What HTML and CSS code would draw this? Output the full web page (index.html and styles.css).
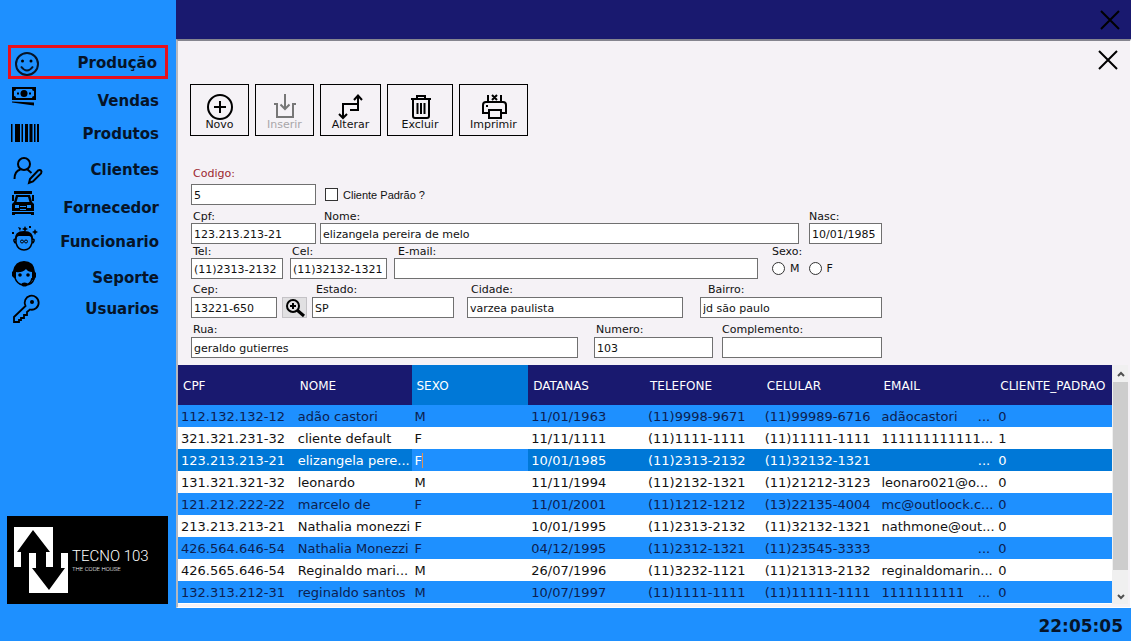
FILE: index.html
```html
<!DOCTYPE html>
<html lang="pt-BR">
<head>
<meta charset="utf-8">
<title>Tecno 103 - Clientes</title>
<link rel="stylesheet" href="styles.css">
</head>
<body>
<div class="app">
  <aside class="sidebar">
    <nav class="menu">
      <a class="menu-item active" href="#"><svg class="menu-icon" viewBox="11 47 34 30"><g fill="none" stroke="#061428" stroke-width="2"><circle cx="27" cy="64" r="11"/><path d="M21 66.500q6 8 12 0"/></g><circle cx="22.500" cy="61" r="1.500"/><circle cx="31" cy="61" r="1.500"/></svg><span>Produção</span></a>
      <a class="menu-item" href="#"><svg class="menu-icon" viewBox="11 85 34 30"><path fill-rule="evenodd" d="M12 87h24v13H12zM16 89q0 2-2 2v5q2 0 2 2h16q0-2 2-2v-5q-2 0-2-2z"/><circle cx="24" cy="93.500" r="3.500"/><path d="M17 92.500h2v2h-2zM29 92.500h2v2h-2zM12 101.500l22 1v3l-22-3z"/></svg><span>Vendas</span></a>
      <a class="menu-item" href="#"><svg class="menu-icon" viewBox="11 118 34 30"><path d="M11 124h1.500v18H11zM15 124h5v18h-5zM21.500 124h1.500v18h-1.500zM25 124h3v18h-3zM29.500 124h3v18h-3zM34 124h1.500v18H34zM37 124h2v18h-2z"/></svg><span>Produtos</span></a>
      <a class="menu-item" href="#"><svg class="menu-icon" viewBox="11 154 34 30"><g fill="none" stroke="#000" stroke-width="2"><circle cx="24" cy="164" r="6"/><path d="M14.500 179q0-8 6-9.500M27.500 169.500l4 3.500M29 183l1-4 8-8.500q2-1 3 0t0 3l-8 8z"/></g></svg><span>Clientes</span></a>
      <a class="menu-item" href="#"><svg class="menu-icon" viewBox="11 192 34 30"><path fill-rule="evenodd" d="M14 191h18v3H14zM12 195h2v6h-2zM32 195h2v6h-2zM16 195h14l2 7 2 2v7H12v-7l2-2zM18 197l-1.500 5h13L28 197zM15 205v3h4v-3zM27 205v3h4v-3zM20 206v1h6v-1zM20 209v1h6v-1zM12 212h22v3h-3v-1H15v1h-3z"/></svg><span>Fornecedor</span></a>
      <a class="menu-item" href="#"><svg class="menu-icon" viewBox="11 226 34 30"><path d="M15 240q-1-9 9-9t9 9h-1q-1-4-3-4H19q-2 0-3 4z"/><path d="M16 237v6q2 7 8 7t8-7v-6M15.500 239q-2 0-1.500 2t2 2M32.500 239q2 0 1.500 2t-2 2" fill="none" stroke="#000" stroke-width="1.500"/><g fill="none" stroke="#000"><circle cx="22" cy="241.500" r="1.500"/><circle cx="26" cy="241.500" r="1.500"/></g><path d="M25 226l1 2 2 1-2 1-1 2-1-2-2-1 2-1zM35 229l1 2 2 1-2 1-1 2-1-2-2-1 2-1zM29 226h2v2h-2zM12 232h2v2h-2zM18 227l3 1-1 3z"/></svg><span>Funcionario</span></a>
      <a class="menu-item" href="#"><svg class="menu-icon" viewBox="11 262 34 30"><path d="M13 271q2-10 11-10 10 0 11 11l1 1v4l-2 3h-2v-8q-4 0-6-3-4 4-10 3v6h-2l-2-2v-4z"/><path d="M15 274v4q2 6 8 7 8 0 9-7M34 279q-2 6-8 6" fill="none" stroke="#000" stroke-width="1.500"/><circle cx="20" cy="275" r="1.800"/><circle cx="28" cy="275" r="1.800"/><ellipse cx="24.500" cy="284.500" rx="3" ry="2"/></svg><span>Seporte</span></a>
      <a class="menu-item" href="#"><svg class="menu-icon" viewBox="11 293 34 30"><path d="M25.500 306A7 7 0 1 1 30 309.500L27 312v3h-3v3h-3v2l-2 0v2h-5v-5z" fill="none" stroke="#000" stroke-width="1.800"/><circle cx="32" cy="302" r="2"/></svg><span>Usuarios</span></a>
    </nav>
    <div class="brand">
      <svg class="brand-mark" viewBox="14 525 54 66"><g fill="#fff"><path d="M14 525h39v40h-7v-15h4L33 528 17 550h4v15h-7z"/><path d="M29 551h7v15h-4l17 22 16-22h-4v-15h7v40H29z"/></g></svg>
      <div class="brand-text"><div class="brand-name">TECNO 103</div><div class="brand-tag">THE CODE HOUSE</div></div>
    </div>
  </aside>

  <header class="titlebar">
    <button class="close" aria-label="Fechar sistema"><svg viewBox="0 0 20 20"><path d="M1 1l18 18M19 1L1 19"/></svg></button>
  </header>

  <main class="panel">
    <div class="panel-head">
      <button class="close" aria-label="Fechar janela"><svg viewBox="0 0 20 20"><path d="M1 1l18 18M19 1L1 19"/></svg></button>
    </div>
    <div class="toolbar">
      <button class="tool"><svg viewBox="0 0 34 26"><circle cx="17" cy="14" r="12"/><path d="M17 8v12M11 14h12"/></svg>Novo</button>
      <button class="tool" disabled><svg viewBox="0 0 34 26"><path d="M17 1v15M12.500 11.500L17 16l4.500-4.500M6 11h3v13h16V11h3"/></svg>Inserir</button>
      <button class="tool wide"><svg viewBox="0 0 34 26"><path d="M9 25V11h14M16 17h8V3M5 21l4 4 4-4M20 7l4-4.500L28 7"/></svg>Alterar</button>
      <button class="tool wider"><svg viewBox="0 0 34 26"><path d="M8 6h20M14 5V3h8v2M10 6v17q0 2 2 2h12q2 0 2-2V6M14.500 10v11M18 10v11M21.500 10v11"/></svg>Excluir</button>
      <button class="tool widest"><svg viewBox="0 0 34 26"><path d="M11 9V2M24 9V2M15 2l5 5M20 2l-5 5M12 20H6v-8q0-3 3-3h17q3 0 3 3v8h-6M12 17h12v8H12zM9 13h2"/></svg>Imprimir</button>
    </div>

    <form class="form">
      <div class="row row-code">
        <div class="field w-doc"><label class="key" for="codigo">Codigo:</label><input id="codigo" type="text" value="5"></div>
        <label class="check"><input type="checkbox"> Cliente Padrão ?</label>
      </div>
      <div class="row row-name">
        <div class="field w-doc"><label for="cpf">Cpf:</label><input id="cpf" type="text" value="123.213.213-21"></div>
        <div class="field grow inset"><label for="nome">Nome:</label><input id="nome" type="text" value="elizangela pereira de melo"></div>
        <div class="field w-date"><label for="nasc">Nasc:</label><input id="nasc" type="text" value="10/01/1985"></div>
      </div>
      <div class="row row-contact">
        <div class="field w-tel"><label for="tel">Tel:</label><input id="tel" type="text" value="(11)2313-2132"></div>
        <div class="field w-cel"><label for="cel">Cel:</label><input id="cel" type="text" value="(11)32132-1321"></div>
        <div class="field grow inset"><label for="email">E-mail:</label><input id="email" type="text"></div>
        <fieldset class="sex"><legend>Sexo:</legend><div class="radios"><label><input type="radio" name="sexo">M</label><label><input type="radio" name="sexo">F</label></div></fieldset>
      </div>
      <div class="row row-place">
        <div class="field w-cep"><label for="cep">Cep:</label><input id="cep" type="text" value="13221-650"></div>
        <button class="lookup" type="button" aria-label="Buscar cep"><svg viewBox="0 0 20 18"><circle cx="8" cy="7" r="6"/><path d="M8 4v6M5 7h6"/><path class="handle" d="M12 11l7 6"/></svg></button>
        <div class="field w-state inset"><label for="estado">Estado:</label><input id="estado" type="text" value="SP"></div>
        <div class="field w-city inset"><label for="cidade">Cidade:</label><input id="cidade" type="text" value="varzea paulista"></div>
        <div class="field grow inset-deep"><label for="bairro">Bairro:</label><input id="bairro" type="text" value="jd são paulo"></div>
      </div>
      <div class="row row-street">
        <div class="field grow"><label for="rua">Rua:</label><input id="rua" type="text" value="geraldo gutierres"></div>
        <div class="field w-num"><label for="numero">Numero:</label><input id="numero" type="text" value="103"></div>
        <div class="field w-comp"><label for="comp">Complemento:</label><input id="comp" type="text"></div>
      </div>
    </form>

    <div class="grid-area">
      <div class="table-box">
        <table class="records">
          <thead><tr><th>CPF</th><th>NOME</th><th class="current">SEXO</th><th>DATANAS</th><th>TELEFONE</th><th>CELULAR</th><th>EMAIL</th><th>CLIENTE_PADRAO</th></tr></thead>
          <tbody>
            <tr><td>112.132.132-12</td><td>adão castori</td><td>M</td><td>11/01/1963</td><td>(11)9998-9671</td><td>(11)99989-6716</td><td><div class="clipped"><span>adãocastori</span><span>...</span></div></td><td>0</td></tr>
            <tr><td>321.321.231-32</td><td>cliente default</td><td>F</td><td>11/11/1111</td><td>(11)1111-1111</td><td>(11)11111-1111</td><td>111111111111...</td><td>1</td></tr>
            <tr class="selected"><td>123.213.213-21</td><td>elizangela pere...</td><td class="editing"><span>F</span></td><td>10/01/1985</td><td>(11)2313-2132</td><td>(11)32132-1321</td><td><div class="clipped"><span></span><span>...</span></div></td><td>0</td></tr>
            <tr><td>131.321.321-32</td><td>leonardo</td><td>M</td><td>11/11/1994</td><td>(11)2132-1321</td><td>(11)21212-3123</td><td>leonaro021@o...</td><td>0</td></tr>
            <tr><td>121.212.222-22</td><td>marcelo de</td><td>F</td><td>11/01/2001</td><td>(11)1212-1212</td><td>(13)22135-4004</td><td>mc@outloock.c...</td><td>0</td></tr>
            <tr><td>213.213.213-21</td><td>Nathalia monezzi</td><td>F</td><td>10/01/1995</td><td>(11)2313-2132</td><td>(11)32132-1321</td><td>nathmone@out...</td><td>0</td></tr>
            <tr><td>426.564.646-54</td><td>Nathalia Monezzi</td><td>F</td><td>04/12/1995</td><td>(11)2312-1321</td><td>(11)23545-3333</td><td><div class="clipped"><span></span><span>...</span></div></td><td>0</td></tr>
            <tr><td>426.565.646-54</td><td>Reginaldo mari...</td><td>M</td><td>26/07/1996</td><td>(11)3232-1121</td><td>(11)21313-2132</td><td>reginaldomarin...</td><td>0</td></tr>
            <tr><td>132.313.212-31</td><td>reginaldo santos</td><td>M</td><td>10/07/1997</td><td>(11)1111-1111</td><td>(11)11111-1111</td><td><div class="clipped"><span>1111111111</span><span>...</span></div></td><td>0</td></tr>
          </tbody>
        </table>
      </div>
      <div class="scrollbar">
        <button aria-label="Rolar para cima"><svg viewBox="0 0 8 6"><path d="M1 5l3-3 3 3"/></svg></button>
        <div class="track"><div class="thumb"></div></div>
        <button aria-label="Rolar para baixo"><svg viewBox="0 0 8 6"><path d="M1 1l3 3 3-3"/></svg></button>
      </div>
    </div>
  </main>

  <footer class="statusbar"><time>22:05:05</time></footer>
</div>
</body>
</html>
```
FILE: styles.css
```css
* { box-sizing: border-box; }
body { margin: 0; font-family: Verdana, "DejaVu Sans", sans-serif; font-size: 11px; color: #111; }
button { font: inherit; padding: 0; margin: 0; border: 0; background: none; color: inherit; }
svg { display: block; overflow: visible; }

.app {
  display: grid;
  grid-template-columns: 176px minmax(0, 1fr);
  grid-template-rows: 39px minmax(0, 1fr) 33px;
  min-height: 100vh;
  background: #1e90ff;
}

/* Sidebar */
.sidebar { grid-row: 1 / 3; display: flex; flex-direction: column; justify-content: space-between; padding: 45px 8px 4px; }
.menu { display: grid; grid-template-rows: 34px 36px 33px 36px 38px 34px 36px 31px; align-items: end; }
.menu-item {
  display: flex; align-items: center; justify-content: space-between;
  height: 30px; padding-right: 6px;
  border: solid transparent; border-width: 0 3px;
  color: #061428; font-size: 15px; font-weight: bold; text-decoration: none;
}
.menu-item span { padding-top: 2px; }
.menu-item.active { height: 34px; padding-right: 8px; border: 3px solid #e8101c; }
.menu-icon { width: 34px; height: 30px; flex: none; }
.brand { display: flex; align-items: center; gap: 4px; height: 88px; margin: 0 0 0 -1px; padding: 0 7px; background: #000; color: #fff; font-family: Roboto, sans-serif; }
.brand-mark { width: 54px; height: 66px; flex: none; }
.brand-name { font-size: 15px; font-weight: 300; line-height: 18px; white-space: nowrap; }
.brand-tag { font-size: 6px; font-weight: 300; line-height: 8px; white-space: nowrap; }

/* Title bar and panel */
.titlebar { display: flex; align-items: center; justify-content: flex-end; padding-right: 11px; background: #19196f; }
.close svg { width: 20px; height: 20px; fill: none; stroke: #000; stroke-width: 2; }
.panel {
  display: flex; flex-direction: column; min-width: 0;
  padding: 0 2px 3px 0;
  border: solid #fff; border-width: 2px 1px 1px 2px; border-top-color: #85858f; border-left-color: #b4b8c0;
  background: #f5f2f6;
}
.panel-head { display: flex; justify-content: flex-end; padding: 9px 10px 0 0; }
.toolbar { display: flex; gap: 6px; margin: 14px 0 0 12px; }
.tool { display: flex; flex-direction: column; align-items: center; width: 59px; height: 52px; padding-top: 8px; border: 1px solid #000; line-height: 12px; }
.tool.wide { width: 61px; }
.tool.wider { width: 66px; }
.tool.widest { width: 69px; }
.tool svg { width: 34px; height: 26px; fill: none; stroke: #000; stroke-width: 2; flex: none; }
.tool:disabled { color: #a8a6a9; }
.tool:disabled svg { stroke: #777; }

/* Form */
.form { max-width: 704px; margin: 31px 0 7px; padding-left: 13px; }
.row { display: flex; align-items: flex-end; }
.row-name { gap: 4px; margin-top: 5px; }
.row-contact { gap: 7px; margin-top: 1px; }
.row-place { gap: 5px; margin-top: 4px; }
.row-street { gap: 9px; margin-top: 5px; }
.row-code { gap: 9px; }
.field { display: flex; flex-direction: column; min-width: 0; }
.field label { padding-left: 2px; line-height: 13px; }
.inset label { padding-left: 4px; }
.inset-deep label { padding-left: 8px; }
.row-code .field { gap: 4px; }
.row-place .field, .row-street .field { gap: 1px; }
.field label.key { color: #9c2630; }
.field input { width: 100%; height: 21px; padding: 1px 2px 0; border: 1px solid #707070; background: #fff; color: #111; font: inherit; }
.grow { flex: 1; }
.w-doc { width: 125px; }
.w-date { width: 73px; margin-left: 6px; }
.w-date label { padding-left: 0; }
.w-tel { width: 92px; }
.w-cel { width: 97px; }
.w-cep { width: 86px; }
.w-state { width: 142px; }
.w-city { width: 216px; margin: 0 12px 0 8px; }
.w-num { width: 119px; margin-left: 7px; }
.w-comp { width: 160px; }
.w-comp label { padding-left: 0; }
.check { display: flex; align-items: center; gap: 5px; height: 21px; font-family: "Liberation Sans", Arial, sans-serif; }
.check input, .radios input { appearance: none; width: 13px; height: 13px; margin: 0; border: 1px solid #333; background: #fff; }
.sex { width: 110px; margin: 0 0 0 7px; padding: 0; border: 0; }
.sex legend { padding: 0; line-height: 13px; }
.radios { display: flex; gap: 9px; height: 21px; }
.radios label { display: flex; align-items: center; gap: 5px; }
.radios input { border-radius: 50%; }
.lookup { display: flex; align-items: center; justify-content: center; width: 25px; height: 21px; border: 1px solid #c4c2c6; background: #e1e0e2; }
.lookup svg { width: 20px; height: 18px; fill: none; stroke: #000; stroke-width: 2; }
.lookup .handle { stroke-width: 3; }

/* Records */
.grid-area { display: flex; flex: 1; }
.table-box { flex: 1; min-width: 0; background: #fff; overflow: hidden; }
.records { width: 100%; table-layout: fixed; border-collapse: collapse; font-size: 13px; }
.records th { height: 40px; padding: 2px 0 0 5px; background: #19196f; color: #fff; font-size: 12px; font-weight: normal; text-align: left; overflow: hidden; }
.records th.current { background: #0078d7; }
.records td { height: 22px; padding: 2px 5px 0 3px; line-height: 20px; white-space: nowrap; overflow: hidden; }
.records tbody tr:nth-child(odd) { background: #1e90ff; color: #0c2050; }
.records tbody tr.selected { background: #0078d7; color: #fff; }
.records td.editing { background: #1e90ff; }
.editing span { border-right: 1px solid #e09050; }
.clipped { display: flex; justify-content: space-between; }
.scrollbar { display: flex; flex-direction: column; width: 16px; padding-left: 1px; background: #f0f0f0; }
.scrollbar button { display: flex; align-items: center; justify-content: center; height: 17px; }
.scrollbar button:last-child { height: 15px; }
.scrollbar svg { width: 8px; height: 6px; fill: none; stroke: #505050; stroke-width: 2; }
.track { flex: 1; }
.thumb { height: 91%; background: #cdcdcd; }

.statusbar { grid-column: 1 / 3; display: flex; align-items: center; justify-content: flex-end; padding: 2px 8px 0 0; color: #061428; font-size: 17px; font-weight: bold; }
```
